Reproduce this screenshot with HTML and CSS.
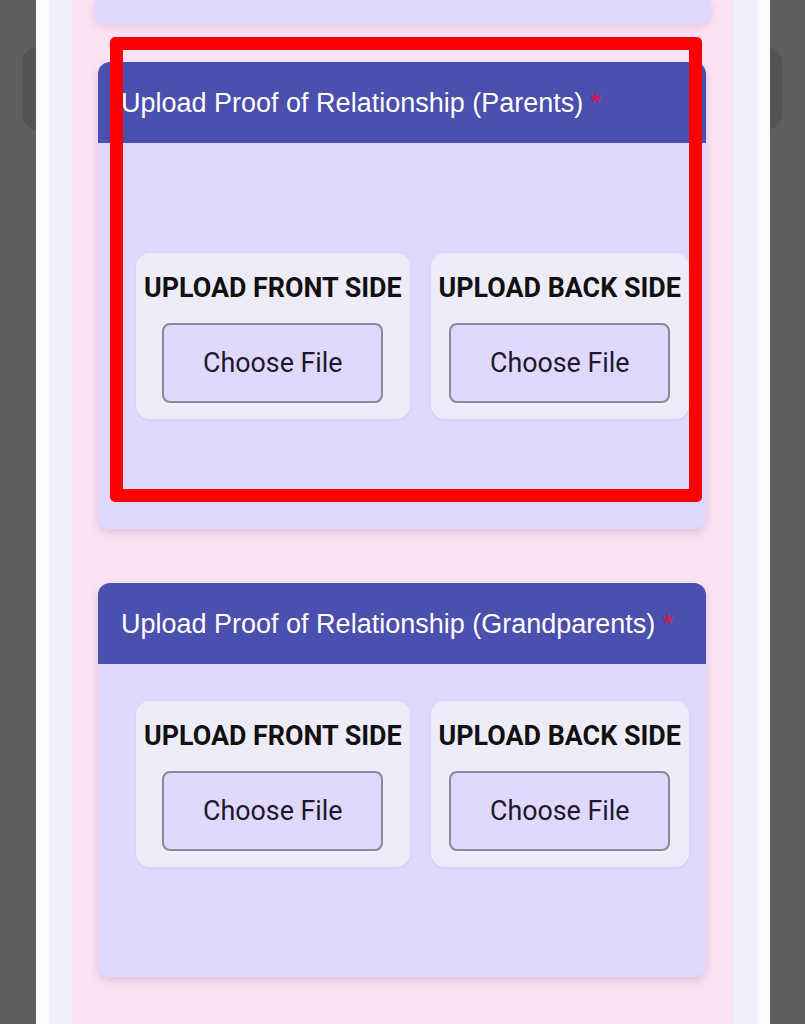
FILE: index.html
```html
<!DOCTYPE html>
<html lang="en">
<head>
<meta charset="utf-8">
<title>Upload Proof of Relationship</title>
<link rel="stylesheet" href="styles.css">
</head>
<body>
<div class="screen">
  <div class="side-tab side-tab-left"></div>
  <div class="side-tab side-tab-right"></div>
  <div class="frame">
    <div class="rail">
      <div class="page">
        <div class="card-prev"></div>

        <section class="card card-parents">
          <div class="card-head">Upload Proof of Relationship (Parents) <span class="req">*</span></div>
          <div class="card-body body-parents">
            <div class="upload-box">
              <div class="upload-label">UPLOAD FRONT SIDE</div>
              <button class="choose">Choose File</button>
            </div>
            <div class="upload-box">
              <div class="upload-label">UPLOAD BACK SIDE</div>
              <button class="choose">Choose File</button>
            </div>
          </div>
        </section>

        <section class="card card-grand">
          <div class="card-head">Upload Proof of Relationship (Grandparents) <span class="req">*</span></div>
          <div class="card-body body-grand">
            <div class="upload-box">
              <div class="upload-label">UPLOAD FRONT SIDE</div>
              <button class="choose">Choose File</button>
            </div>
            <div class="upload-box">
              <div class="upload-label">UPLOAD BACK SIDE</div>
              <button class="choose">Choose File</button>
            </div>
          </div>
        </section>
      </div>
    </div>
  </div>
  <div class="highlight"></div>
</div>
</body>
</html>
```

FILE: styles.css
```css
html, body {
  margin: 0;
  padding: 0;
}
body {
  background: #5e5e5e;
  font-family: Roboto, "Liberation Sans", sans-serif;
  overflow: hidden;
}
.screen {
  position: relative;
  width: 805px;
  height: 1024px;
  overflow: hidden;
}
.side-tab {
  position: absolute;
  top: 47px;
  width: 40px;
  height: 83px;
  border-radius: 16px;
  background: #545454;
}
.side-tab-left { left: 22px; }
.side-tab-right { left: 742px; }
.frame {
  position: relative;
  margin-left: 36px;
  width: 734px;
  height: 1024px;
  background: #fbfbfb;
  padding: 0 13px;
  box-sizing: border-box;
}
.rail {
  height: 100%;
  background: #f0eefa;
  padding: 0 24px 0 23px;
}
.page {
  height: 100%;
  background: #fce3f3;
  display: flex;
  flex-direction: column;
}
.card-prev {
  margin: 0 22px 0 22px;
  height: 24px;
  background: #e0d8fe;
  border-radius: 0 0 12px 12px;
  box-shadow: 0 3px 8px rgba(120, 80, 120, 0.18);
}
.card {
  margin: 0 27px 0 26px;
  background: #e0d8fe;
  border-radius: 12px;
  box-shadow: 0 4px 10px rgba(120, 80, 120, 0.22);
  overflow: hidden;
}
.card-parents { margin-top: 38px; }
.card-grand { margin-top: 54px; }
.card-head {
  height: 81px;
  box-sizing: border-box;
  background: #4b4fad;
  color: #ffffff;
  font-family: "Liberation Sans", Arial, sans-serif;
  font-size: 27px;
  line-height: 30px;
  padding: 26px 0 0 23px;
}
.req {
  color: #e0103f;
}
.card-body {
  display: flex;
  gap: 21px;
  padding-left: 38px;
}
.body-parents {
  padding-top: 110px;
  padding-bottom: 110px;
}
.body-grand {
  padding-top: 37px;
  padding-bottom: 110px;
}
.upload-box {
  background: #efecf9;
  border-radius: 14px;
  padding: 20px 8px 16px;
  display: flex;
  flex-direction: column;
  align-items: center;
  box-shadow: 0 1px 3px rgba(90, 70, 120, 0.08);
}
.upload-label {
  font-family: Roboto, "Liberation Sans", sans-serif;
  font-weight: 700;
  font-size: 26.85px;
  line-height: 30px;
  color: #111111;
  white-space: nowrap;
}
.choose {
  margin-top: 20px;
  width: 221px;
  height: 80px;
  box-sizing: border-box;
  border: 2px solid #8c8898;
  border-radius: 8px;
  background: #e0d8fe;
  font-family: Roboto, "Liberation Sans", sans-serif;
  font-size: 26.8px;
  color: #1c1a28;
  padding: 0;
}
.highlight {
  position: absolute;
  left: 110px;
  top: 37px;
  width: 592px;
  height: 465px;
  box-sizing: border-box;
  border: 13px solid #ff0000;
  border-radius: 5px;
  pointer-events: none;
}
```
